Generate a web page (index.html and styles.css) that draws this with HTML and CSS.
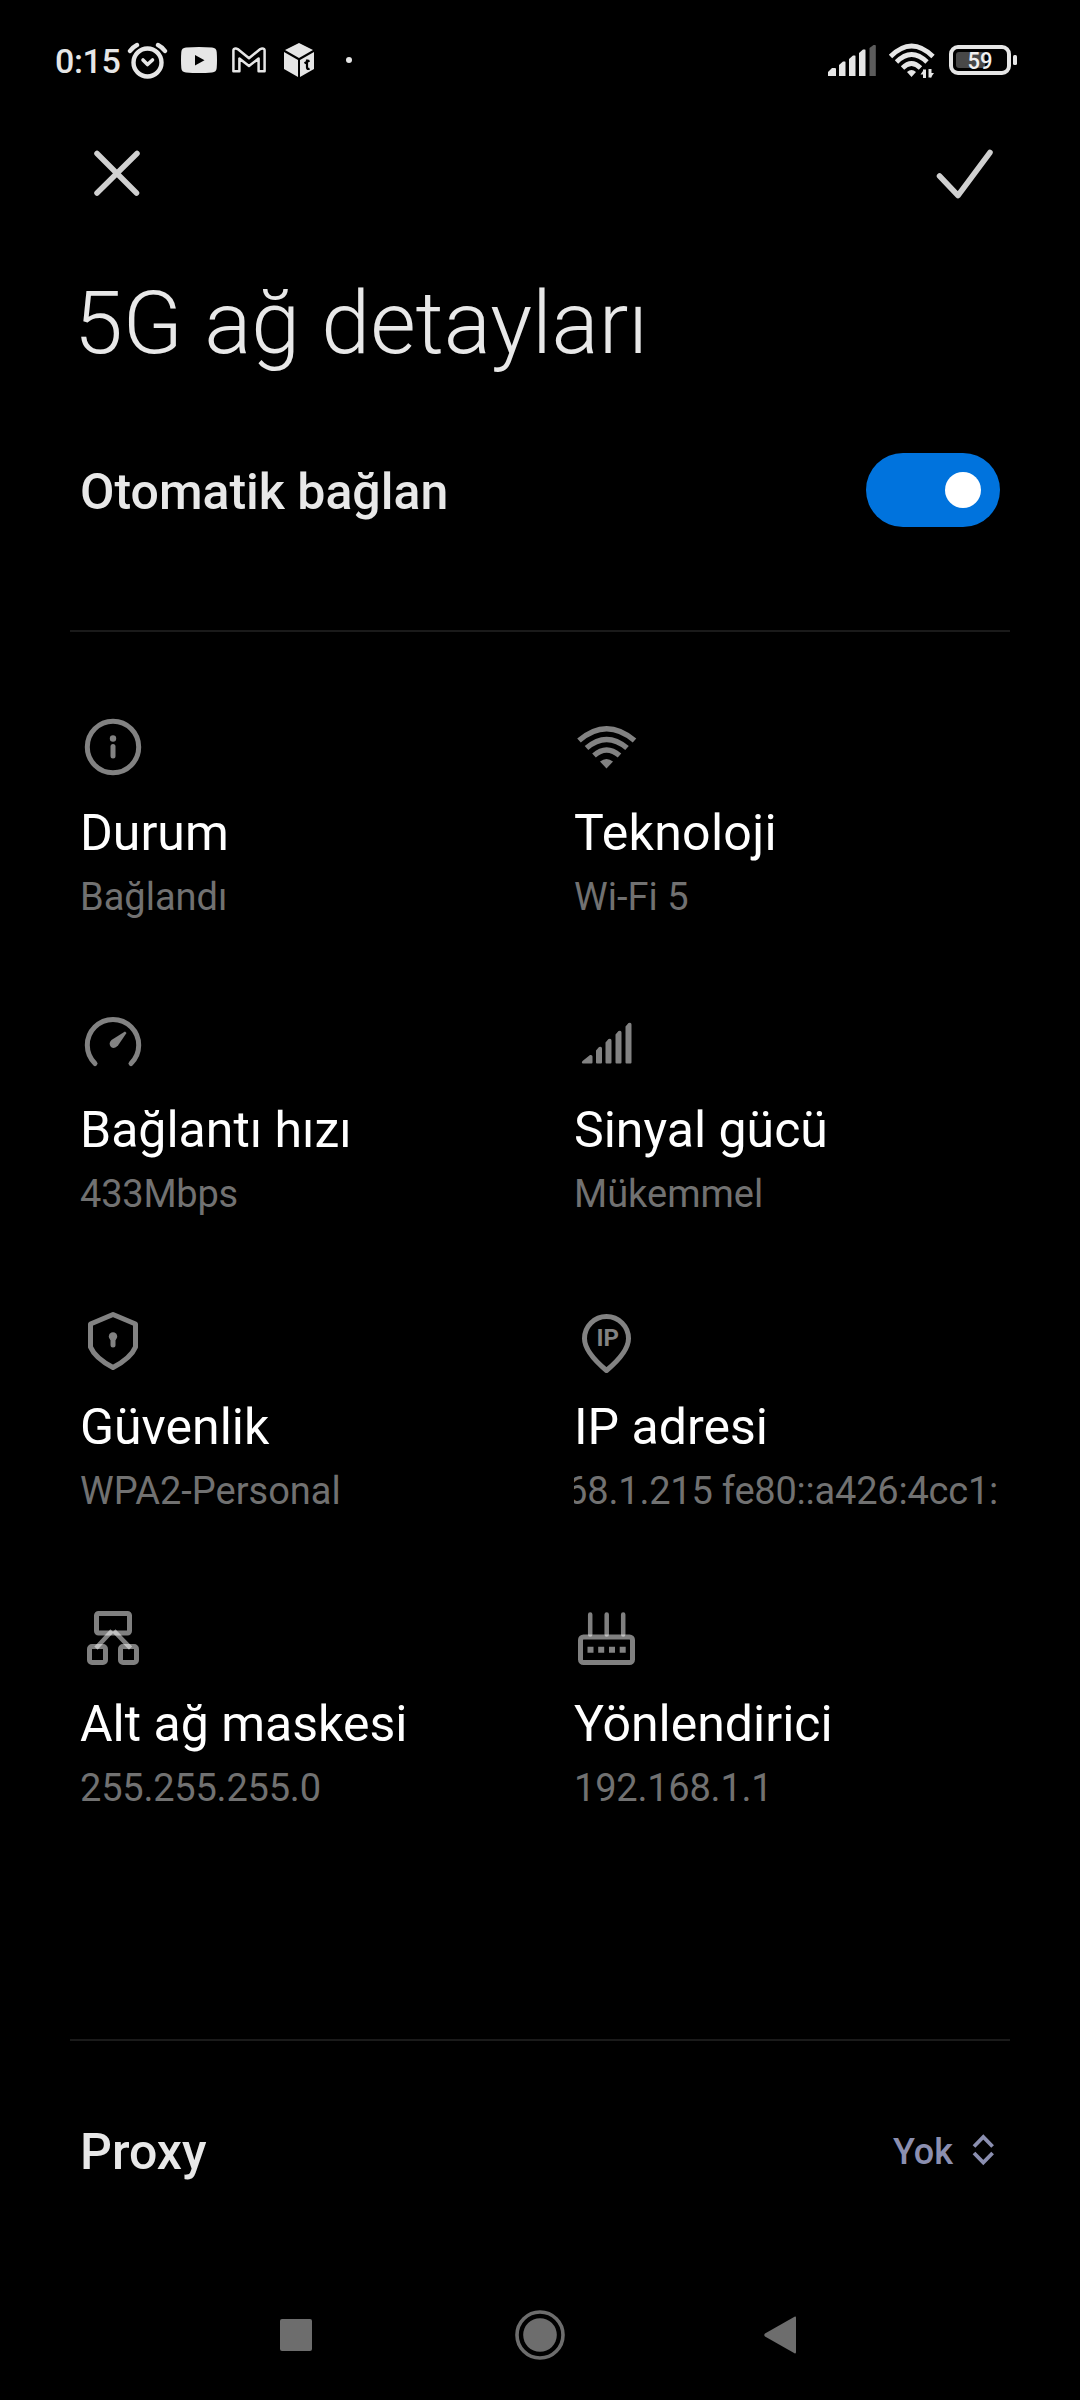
FILE: index.html
```html
<!DOCTYPE html>
<html lang="tr">
<head>
<meta charset="utf-8">
<title>5G ağ detayları</title>
<link rel="stylesheet" href="styles.css">
</head>
<body>
<div class="screen">
  <header class="status">
    <div class="status-left">
      <span class="time">0:15</span>
      <svg class="alarm" width="42" height="40" viewBox="126 40 42 40" fill="none" stroke="#e6e6e6" stroke-linecap="round">
        <circle cx="147.5" cy="61.5" r="14" stroke-width="4.4"/>
        <path d="M143 59l4.5 4.5 5-4.5" stroke-width="3.600" stroke-linejoin="round"/>
        <path d="M130 50q3-4 7-6M158 44q4 2 7 6" stroke-width="4.400"/>
      </svg>
      <svg class="video" width="36" height="26" viewBox="0 0 36 26">
        <path d="M5 .5Q18-.5 31 .5 35.500 .8 35.700 5 36.300 13 35.700 21 35.500 25.200 31 25.500 18 26.500 5 25.500 .5 25.200 .3 21-.3 13 .3 5 .5 .8 5 .5z" fill="#e6e6e6"/>
        <path d="M14 8v10.500l9.500-5.250z" fill="#000"/>
      </svg>
      <svg class="mail" width="34" height="26" viewBox="0 0 34 26" fill="none" stroke="#e6e6e6" stroke-width="2.500" stroke-linejoin="round">
        <path d="M1.400 4Q1.200 1.400 3.700 1.400L6 2.200l11 9 11-9 2.300-.8Q32.800 1.400 32.600 4v20.300h-6V11.500L17 19l-9.600-7.500v12.800h-6z"/>
      </svg>
      <svg class="cube" width="30" height="34" viewBox="0 0 30 34">
        <path d="M15 0l14 7-14 8L1 7z" fill="#e6e6e6"/>
        <path d="M0 9l14 8v17L0 26zM30 9l-14 8v17l14-8z" fill="#e6e6e6"/>
        <path d="M23 16.500v8q0 2.300 2.500 1M20.500 20.200l5-2.600" fill="none" stroke="#000" stroke-width="2.200"/>
      </svg>
      <span class="dot"></span>
    </div>
    <div class="status-right">
      <svg width="48" height="32" viewBox="827 45 48 32">
        <path d="M827 76v-4l4-4h3q1 0 1 1v7zM838 76V65l4-3.500h2q.5 0 .5 1V76zM848 76V59l4-3.500h2q.5 0 .5 1V76zM858 76V53l4-3.500h2q.5 0 .5 1V76z" fill="#e6e6e6"/>
        <path d="M868.500 76V48l4-3h1.500q.8 0 .8 1v30z" fill="#5c5c5c"/>
      </svg>
      <svg width="48" height="38" viewBox="887 42 48 38" fill="none" stroke="#e6e6e6" stroke-width="4.800">
        <path d="M889.500 56.500Q910.500 35.500 932 56.500M895.500 62Q910.500 47 926 62M901.500 68Q910.500 59 919.500 68"/>
        <path d="M906 72q4.500-4 9 0l-4.500 5z" fill="#e6e6e6" stroke="none"/>
        <path d="M923.500 69.500V78M929 69v8.500" stroke-width="3"/>
        <path d="M919.500 74.500l3.500-5V74.500zM933 73l-3.500 5v-5z" fill="#e6e6e6" stroke="none"/>
      </svg>
      <svg class="battery" width="70" height="32" viewBox="948 44 70 32">
        <rect x="951" y="47" width="58" height="26" rx="7" fill="none" stroke="#e6e6e6" stroke-width="4"/>
        <rect x="956" y="52" width="29" height="16" rx="3" fill="#484848"/>
        <rect x="1013" y="55" width="4" height="10" rx="1.500" fill="#e6e6e6"/>
        <text x="967.500" y="68.700" textLength="25" lengthAdjust="spacingAndGlyphs" class="battery-text">59</text>
      </svg>
    </div>
  </header>

  <nav class="actions">
    <svg width="52" height="52" viewBox="90 148 52 52" class="action-icon"><path d="M97 153.500l39.500 39.500M137 153.500l-40 39.500"/></svg>
    <svg width="60" height="52" viewBox="935 147 60 52" class="action-icon"><path d="M939.500 175l18.500 19.500L990 151.500"/></svg>
  </nav>

  <h1 class="title">5G ağ detayları</h1>

  <div class="row auto">
    <span class="row-label">Otomatik bağlan</span>
    <span class="toggle"><span class="thumb"></span></span>
  </div>

  <hr class="divider">

  <main class="grid">
    <section class="cell">
      <svg class="icon" viewBox="80 714 66 66"><circle cx="113" cy="747" r="25.700"/><path d="M113 746.500v9.500"/><circle class="solid" cx="113" cy="738.500" r="3.200"/></svg>
      <h2>Durum</h2><p>Bağlandı</p>
    </section>
    <section class="cell">
      <svg class="icon" viewBox="574 714 66 66"><path class="arc" d="M579 740.500Q606.500 717 634.500 740.500M586.500 748Q606.500 731 627 748M594 755.500Q606.500 744.500 619.500 755.500"/><path class="solid" d="M600 761.500q6.500-5 13 0l-6.500 7z"/></svg>
      <h2 class="loose">Teknoloji</h2><p>Wi-Fi 5</p>
    </section>
    <section class="cell">
      <svg class="icon" viewBox="80 1011 66 66"><path d="M95 1063.500A25.700 25.700 0 1 1 131 1063.500"/><path class="solid" d="M125 1031.500l1.500 1.500-8.500 12.500q-3.500 4-7 1.500-3-3.500.5-7z"/></svg>
      <h2>Bağlantı hızı</h2><p class="numeric">433Mbps</p>
    </section>
    <section class="cell">
      <svg class="icon" viewBox="574 1011 66 66"><path class="solid" d="M583 1063.500q-2-.5-.5-2.500l7.500-6q2.500-.5 2.500 1.500v6q0 1-1 1zM596 1062.500v-12l3-3.500q3-1 3 1.500v14q0 1-1 1h-4q-1 0-1-1zM605.500 1062.500v-20l3-3.500q3-1 3 1.500v22q0 1-1 1h-4q-1 0-1-1zM615.500 1062.500v-28l3-3.500q3-1 3 1.500v30q0 1-1 1h-4q-1 0-1-1zM625.500 1062.500v-36l3-3.500q3-1 3 1.500v38q0 1-1 1h-4q-1 0-1-1z"/></svg>
      <h2>Sinyal gücü</h2><p>Mükemmel</p>
    </section>
    <section class="cell">
      <svg class="icon" viewBox="80 1308 66 66"><path d="M113 1314.500L135.500 1324V1347Q131 1358 113 1367.500Q95 1358 90.500 1347V1324z"/><circle class="solid" cx="113" cy="1336.500" r="4.200"/><path d="M113 1337v8"/></svg>
      <h2>Güvenlik</h2><p>WPA2-Personal</p>
    </section>
    <section class="cell">
      <svg class="icon" viewBox="574 1308 66 66"><path d="M606.500 1370.500Q584.500 1352 584.500 1338.500A22 22 0 0 1 628.500 1338.500Q628.500 1352 606.500 1370.500z"/><text class="ip" x="607.800" y="1346" text-anchor="middle">IP</text></svg>
      <h2>IP adresi</h2><p class="marquee numeric"><span>68.1.215 fe80::a426:4cc1:</span></p>
    </section>
    <section class="cell">
      <svg class="icon" viewBox="80 1605 66 66"><rect x="96.500" y="1613.500" width="33" height="19.500" rx="2"/><rect x="89.500" y="1646.500" width="16" height="16" rx="2.500"/><rect x="120.500" y="1646.500" width="16" height="16" rx="2.500"/><path class="link" d="M110.500 1632.500L97.500 1646.500M115.500 1632.500L129 1646.500"/></svg>
      <h2>Alt ağ maskesi</h2><p class="numeric">255.255.255.0</p>
    </section>
    <section class="cell">
      <svg class="icon" viewBox="574 1605 66 66"><rect x="580.500" y="1637" width="52" height="25.500" rx="3"/><path class="antenna" d="M590.200 1614.500v20M606.700 1614.500v20M623.200 1614.500v20"/><path class="ports" d="M587.500 1649.700h6M598.200 1649.700h6M609 1649.700h6M619.700 1649.700h6"/></svg>
      <h2>Yönlendirici</h2><p class="numeric">192.168.1.1</p>
    </section>
  </main>

  <hr class="divider second">

  <div class="row proxy">
    <span class="row-label">Proxy</span>
    <span class="select">Yok
      <svg width="24" height="34" viewBox="971 2133 24 34" fill="none" stroke="#8b8fb0" stroke-width="3.800"><path d="M974 2146.500l9.300-9.500 9.300 9.500M974 2153l9.300 9.500 9.300-9.500"/></svg>
    </span>
  </div>

  <footer class="navbar">
    <svg width="32" height="32" viewBox="0 0 32 32"><rect width="32" height="32" rx="2"/></svg>
    <svg width="50" height="50" viewBox="0 0 50 50"><circle cx="25" cy="25" r="23" fill="none" stroke="#6d6d6d" stroke-width="3.600"/><circle cx="25" cy="25" r="16.800"/></svg>
    <svg width="32" height="38" viewBox="0 0 32 38"><path d="M30.500.8Q32 0 32 2v34q0 2-1.500 1.200L1 20.500q-1.500-1.500 0-3z"/></svg>
  </footer>
</div>
</body>
</html>
```
FILE: styles.css
```css
* { box-sizing: border-box; margin: 0; padding: 0; }
body { background: #000; font-family: Roboto, sans-serif; color: #e8e8e8; }
svg { display: block; flex: none; }
.screen { width: 1080px; height: 2400px; display: flex; flex-direction: column; overflow: hidden; }
.screen > * { flex-shrink: 0; }

.status { height: 120px; display: flex; justify-content: space-between; align-items: flex-start; padding: 40px 62px 0 55px; }
.status-left, .status-right { display: flex; height: 42px; align-items: center; }
.time { font-size: 34px; font-weight: 500; line-height: 42px; width: 71px; letter-spacing: -.4px; color: #e6e6e6; }
.video { margin-left: 13px; margin-top: -2px; }
.mail { margin-left: 15px; margin-top: -3px; }
.cube { margin-left: 18px; margin-top: -2px; }
.dot { width: 6px; height: 6px; border-radius: 50%; background: #e6e6e6; margin-left: 32px; margin-top: -2px; }
.status-right { gap: 12px; }
.battery { margin-top: -2px; }
.battery-text { font-size: 23px; font-weight: 500; fill: #f0f0f0; }

.actions { height: 110px; display: flex; justify-content: space-between; align-items: flex-start; padding: 28px 85px 0 90px; }
.action-icon { fill: none; stroke: #d0d0d0; stroke-width: 5.5px; stroke-linecap: round; stroke-linejoin: round; }

.title { font-size: 88px; font-weight: 300; line-height: 104px; letter-spacing: -.1px; padding-left: 74px; margin-top: 41px; color: #e8e8e8; }
.row { display: flex; align-items: center; justify-content: space-between; padding: 0 80px; }
.row-label { font-size: 50px; font-weight: 500; line-height: 60px; }
.auto { height: 74px; margin-top: 78px; }
.auto .row-label { padding-top: 4px; }
.toggle { width: 134px; height: 74px; border-radius: 37px; background: #0073dd; display: flex; align-items: center; justify-content: flex-end; padding-right: 19px; }
.thumb { width: 36px; height: 36px; border-radius: 50%; background: #fff; }
.divider { border: 0; height: 2px; margin: 103px 70px 0; background: #1a1a1a; }
.divider.second { margin-top: 0; }

.grid { display: grid; grid-template-columns: 494px 426px; grid-auto-rows: 297px; padding: 82px 80px 0; height: 1407px; }
.icon { width: 66px; height: 66px; fill: none; stroke: #828282; stroke-width: 5; stroke-linecap: round; stroke-linejoin: round; }
.solid { fill: #828282; stroke: none; }
.arc { stroke-linecap: butt; stroke-width: 5.5px; }
.icon rect { stroke: rgba(255, 255, 255, .5); }
.icon .link, .icon .antenna { stroke: rgba(255, 255, 255, .5); stroke-width: 4.5px; }
.icon .link { stroke-linecap: square; }
.ports { stroke-linecap: butt; stroke-width: 6px; }
.ip { font-size: 24px; font-weight: 700; fill: #828282; stroke: none; }
.cell h2 { font-size: 50px; font-weight: 400; line-height: 60px; margin-top: 23px; color: #fff; white-space: nowrap; }
.cell .loose { letter-spacing: .3px; }
.cell p { font-size: 38px; line-height: 46px; margin-top: 11px; color: #717171; white-space: nowrap; }
.cell .numeric { letter-spacing: -.22px; }
.marquee { overflow: hidden; display: flex; justify-content: flex-end; padding-right: 2px; }

.proxy { height: 60px; margin-top: 81px; padding-right: 85px; }
.select { display: flex; align-items: center; gap: 18px; font-size: 36px; font-weight: 500; line-height: 42px; color: #8b8fb0; }
.select svg { margin-top: -4px; }
.navbar { margin-top: auto; height: 130px; display: flex; align-items: center; padding-left: 280px; }
.navbar svg { fill: #6d6d6d; }
.navbar svg:nth-child(2) { margin-left: 203px; }
.navbar svg:nth-child(3) { margin-left: 199px; }
```
